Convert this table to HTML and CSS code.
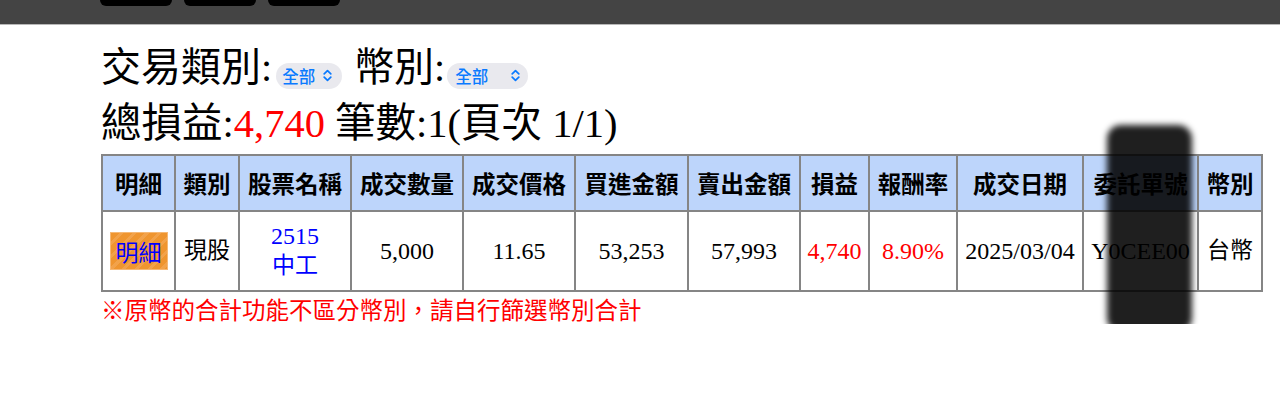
FILE: index.html
```html
<!DOCTYPE html>
<html lang="zh-Hant">
<head>
<meta charset="utf-8">
<title>交易明細</title>
<link rel="stylesheet" href="styles.css">
</head>
<body>
<div class="topbar">
  <span class="tab"></span>
  <span class="tab"></span>
  <span class="tab"></span>
</div>
<main class="content">
  <div class="line filters">
    <span>交易類別:</span>
    <span class="select sel1"><span class="sel-text">全部</span><svg class="chev" width="9" height="13" viewBox="0 0 9 13"><path d="M1.2 4.8 L4.5 1.6 L7.8 4.8 M1.2 8.2 L4.5 11.4 L7.8 8.2" fill="none" stroke="#0a7aff" stroke-width="1.7" stroke-linecap="round" stroke-linejoin="round"/></svg></span>
    <span class="lbl2">幣別:</span>
    <span class="select sel2"><span class="sel-text">全部</span><svg class="chev" width="9" height="13" viewBox="0 0 9 13"><path d="M1.2 4.8 L4.5 1.6 L7.8 4.8 M1.2 8.2 L4.5 11.4 L7.8 8.2" fill="none" stroke="#0a7aff" stroke-width="1.7" stroke-linecap="round" stroke-linejoin="round"/></svg></span>
  </div>
  <div class="line summary">總損益:<span class="red">4,740</span> 筆數:1(頁次 1/1)</div>
  <div class="table-wrap">
    <table class="grid">
      <colgroup>
        <col class="c1"><col class="c2"><col class="c3"><col class="c4"><col class="c5"><col class="c6">
        <col class="c7"><col class="c8"><col class="c9"><col class="c10"><col class="c11"><col class="c12">
      </colgroup>
      <thead>
        <tr>
          <th>明細</th><th>類別</th><th>股票名稱</th><th>成交數量</th><th>成交價格</th><th>買進金額</th>
          <th>賣出金額</th><th>損益</th><th>報酬率</th><th>成交日期</th><th>委託單號</th><th>幣別</th>
        </tr>
      </thead>
      <tbody>
        <tr>
          <td><span class="detail-btn">明細</span></td>
          <td class="cjk">現股</td>
          <td class="blue"><div class="stock">2515<br><span class="cjk">中工</span></div></td>
          <td>5,000</td>
          <td>11.65</td>
          <td>53,253</td>
          <td>57,993</td>
          <td class="red">4,740</td>
          <td class="red">8.90%</td>
          <td>2025/03/04</td>
          <td>Y0CEE00</td>
          <td class="cjk">台幣</td>
        </tr>
      </tbody>
    </table>
    <div class="redact"></div>
  </div>
  <p class="note">※原幣的合計功能不區分幣別，請自行篩選幣別合計</p>
</main>
</body>
</html>
```
FILE: styles.css
```css
html, body {
  margin: 0;
  padding: 0;
  background: #ffffff;
}
body {
  font-family: "Liberation Serif", "Noto Sans CJK TC", serif;
  color: #000;
}
.topbar {
  height: 24px;
  background: #444444;
  border-bottom: 1px solid #b8b8b8;
  display: flex;
  gap: 12px;
  padding-left: 100px;
  align-items: flex-start;
}
.tab {
  width: 72px;
  height: 6px;
  background: #000;
  border-radius: 0 0 7px 7px;
}
.content {
  padding: 15px 0 0 101px;
}
.line {
  font-size: 40px;
  line-height: 56px;
  height: 56px;
  white-space: nowrap;
}
.summary {
  font-size: 40.5px;
}
.filters {
  display: flex;
  align-items: center;
}
.select {
  display: inline-flex;
  align-items: center;
  justify-content: space-between;
  height: 26px;
  border-radius: 13px;
  background: #e9e9ee;
  margin-top: 15px;
  box-sizing: border-box;
}
.sel1 {
  width: 66px;
  margin-left: 4px;
  padding: 0 10px 0 6px;
}
.sel2 {
  width: 81px;
  margin-left: 2px;
  padding: 0 8px 0 8px;
}
.lbl2 {
  margin-left: 12px;
}
.sel-text {
  font-family: "Noto Sans CJK TC", sans-serif;
  font-size: 16.5px;
  font-weight: 500;
  line-height: 26px;
  color: #0a7aff;
}
.chev {
  display: block;
}
.red {
  color: #ff0000;
}
.blue {
  color: #0000ff;
}
.table-wrap {
  position: relative;
  width: 1160px;
  margin-top: 2px;
}
.grid {
  width: 1160px;
  table-layout: fixed;
  border-collapse: separate;
  border-spacing: 0;
  border: 1px solid #858585;
  font-size: 24px;
}
.c1 { width: 73px; }
.c2 { width: 64px; }
.c3 { width: 112px; }
.c4 { width: 112px; }
.c5 { width: 112px; }
.c6 { width: 113px; }
.c7 { width: 112px; }
.c8 { width: 69px; }
.c9 { width: 88px; }
.c10 { width: 126px; }
.c11 { width: 115px; }
.c12 { width: 64px; }
.grid th, .grid td {
  border: 1px solid #858585;
  padding: 0;
  text-align: center;
  white-space: nowrap;
  overflow: hidden;
}
.grid th {
  background: #bdd5fb;
  font-family: "Noto Sans CJK TC", sans-serif;
  font-weight: 700;
  font-size: 23.5px;
  height: 54px;
  line-height: 30px;
}
.grid td {
  height: 78px;
  line-height: 30px;
}
.cjk {
  font-size: 23px;
}
.stock {
  line-height: 29px;
}
.detail-btn {
  display: inline-block;
  width: 58px;
  height: 38px;
  box-sizing: border-box;
  border: 1px solid #f6b874;
  background: repeating-linear-gradient(135deg, #ef952f 0px, #ef952f 6px, #f2a24a 6px, #f2a24a 9px);
  color: #0000ff;
  font-family: "Noto Sans CJK TC", sans-serif;
  font-size: 23px;
  line-height: 36px;
  vertical-align: middle;
}
.redact {
  position: absolute;
  left: 1006px;
  top: -29px;
  width: 85px;
  height: 207px;
  background: rgba(0, 0, 0, 0.88);
  border-radius: 14px;
  filter: blur(3px);
}
.note {
  margin: 0;
  padding-top: 2px;
  font-family: "Noto Sans CJK TC", sans-serif;
  font-size: 23.5px;
  line-height: 30px;
  color: #ff0000;
}
```
